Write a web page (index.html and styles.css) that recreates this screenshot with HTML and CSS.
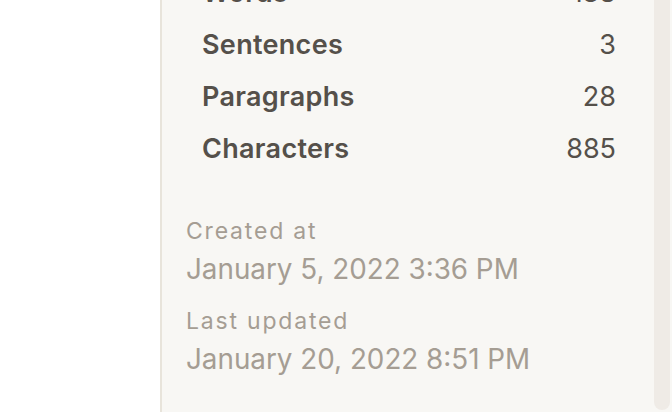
FILE: index.html
```html
<!DOCTYPE html>
<html lang="en">
<head>
<meta charset="utf-8">
<title>Document info</title>
<link rel="stylesheet" href="styles.css">
</head>
<body>
<div class="layout">
  <div class="blank"></div>
  <aside class="panel">
    <div class="scroll">
      <div class="stats">
        <div class="row"><span class="label">Words</span><span class="value">138</span></div>
        <div class="row"><span class="label">Sentences</span><span class="value">3</span></div>
        <div class="row"><span class="label">Paragraphs</span><span class="value">28</span></div>
        <div class="row"><span class="label">Characters</span><span class="value">885</span></div>
      </div>
      <div class="meta">
        <div class="group">
          <div class="meta-label">Created at</div>
          <div class="meta-value">January 5, 2022 3:36 PM</div>
        </div>
        <div class="group">
          <div class="meta-label">Last updated</div>
          <div class="meta-value">January 20, 2022 8:51 PM</div>
        </div>
      </div>
    </div>
    <div class="thumb"></div>
  </aside>
</div>
</body>
</html>
```
FILE: styles.css
```css
* { box-sizing: border-box; }
html, body {
  margin: 0;
  padding: 0;
  background: #ffffff;
  font-family: "Inter", "Noto Sans", sans-serif;
}
.layout {
  display: flex;
  width: 672px;
  height: 412px;
  overflow: hidden;
}
.blank {
  width: 160px;
  flex: none;
  background: #ffffff;
}
.panel {
  position: relative;
  flex: 1;
  background: #f8f7f4;
  border-left: 2px solid #e8e4db;
  overflow: hidden;
}
.scroll {
  margin-top: -34px;
  padding: 0 56px 0 24px;
}
.stats {
  padding: 0 0 0 16px;
}
.row {
  display: flex;
  justify-content: space-between;
  align-items: center;
  height: 52px;
  color: #55504a;
}
.label {
  font-size: 27px;
  font-weight: 600;
  letter-spacing: 0.3px;
}
.value {
  font-size: 27px;
  font-weight: 400;
}
.meta {
  padding-top: 41px;
  display: flex;
  flex-direction: column;
  gap: 18px;
}
.meta-label {
  font-size: 23px;
  line-height: 32px;
  letter-spacing: 1.8px;
  color: #a59d93;
}
.meta-value {
  margin-top: 4px;
  font-size: 27.8px;
  line-height: 36px;
  color: #a59d93;
}
.thumb {
  position: absolute;
  top: 0;
  right: 2px;
  width: 16px;
  height: 410px;
  background: #efebe6;
  border-radius: 0 0 8px 8px;
}
```
